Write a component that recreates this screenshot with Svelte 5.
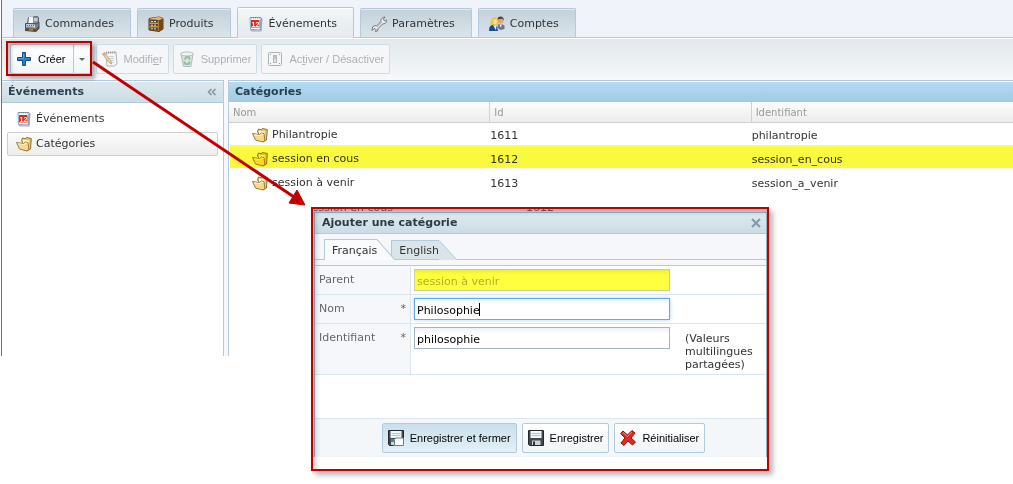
<script lang="ts">
	type Category = {
		name: string;
		id: number;
		slug: string;
	};

	const tabs = [
		{ label: 'Commandes', icon: 'register' },
		{ label: 'Produits', icon: 'cabinet' },
		{ label: 'Événements', icon: 'calendar' },
		{ label: 'Paramètres', icon: 'wrench' },
		{ label: 'Comptes', icon: 'users' }
	];

	const menu = [
		{ label: 'Événements', icon: 'calendar' },
		{ label: 'Catégories', icon: 'folder' }
	];

	const categories: Category[] = [
		{ name: 'Philantropie', id: 1611, slug: 'philantropie' },
		{ name: 'session en cous', id: 1612, slug: 'session_en_cous' },
		{ name: 'session à venir', id: 1613, slug: 'session_a_venir' }
	];

	let activeTab = $state('Événements');
	let activeMenu = $state('Catégories');
	let selected = $state(1612);
	let language = $state('Français');

	let parent = $state('session à venir');
	let name = $state('Philosophie');
	let identifier = $state('philosophie');

	function reset() {
		name = '';
		identifier = '';
	}
</script>

{#snippet icon(kind: string)}
	<svg class="icon" viewBox="0 0 16 16" width="16" height="16" aria-hidden="true">
		{#if kind === 'register'}
			<path d="M4.5 1.5l9-1 1 1v6h-11z" fill="#8b979f" stroke="#566069" />
			<path d="M5 1l4-.5V7H4.500z" fill="#f4f7f9" />
			<path d="M10 2h3.500v3H10z" fill="#c2ccd3" />
			<path d="M1 12.500l11 1 3.500-4v3l-3.500 3.500-11-1z" fill="#6b4524" />
			<path d="M1.500 7.500l10.500.5 3-2v4l-3 3.500-10.500-1z" fill="#77828a" stroke="#49525a" />
			<path d="M2.500 8l8.500.5v3l-9-.5z" fill="#d3dae0" />
			<path d="M3 9.500h7M3.500 10.800h6" stroke="#59646d" stroke-dasharray="1 1" />
			<path d="M5 13.800h4" stroke="#cfa055" />
		{:else if kind === 'cabinet'}
			<path d="M1 2.500L11 1l4 1.500V13l-4 2.500L1 14z" fill="#a9752f" stroke="#5b3c18" />
			<path d="M11 4l4-1.500V13l-4 2.500z" fill="#6f481e" />
			<path d="M2.200 4h7.600v2.800H2.200zM2.200 7.800h7.600v2.500H2.200zM2.200 11.200h7.600V14H2.200z" fill="#4a4238" />
			<path d="M3 5.500h6M3 9.200h6M3 12.800h6" stroke="#d9e2e8" stroke-dasharray="2 1" />
			<path d="M1 2.500L11 1l4 1.500L11 4z" fill="#e4b76c" />
			<path d="M1.500 7.300h9M1.500 10.800h9" stroke="#e0a850" />
		{:else if kind === 'calendar'}
			<path d="M12 1.500l2.500 1-1 13-2-1.500z" fill="#8fa4be" />
			<path d="M2 1.500h11l-1 12.500-9.500-.5z" fill="#fafbfd" stroke="#8ba0ba" />
			<path d="M2 14l9.500.5 2 1H4z" fill="#9bafc6" />
			<path d="M3 1.800h9.500" stroke="#64788f" stroke-dasharray="1 1" />
			<rect x="3" y="4" width="8.500" height="7.500" fill="#df2a16" />
			<text x="3.500" y="10.500" class="day">12</text>
		{:else if kind === 'wrench'}
			<path
				d="M1 14.500l.5-3.500L4 9.500l1.500.5L10 5.500V3.500L12.500 1H14l-1.500 2 .5 1.500 1.500.500L16 3.500V5l-2 2.500-2.500.500L7 12.500 6.500 15l-2 .5.5-2-1-1-1.500.5z"
				fill="#eceeef"
				stroke="#73787c"
				stroke-linejoin="round"
			/>
			<path d="M6 11l5-5" stroke="#b4b9bd" />
		{:else if kind === 'users'}
			<path d="M9 8.500q3.500-1.500 6.500 1v3.500l-4 1-3-2z" fill="#707782" />
			<path d="M10.500 8.500l1 3 1.500-3z" fill="#f5f7f8" />
			<circle cx="11.500" cy="4.800" r="3" fill="#dba979" />
			<path d="M8.300 4q0-3.500 3.200-3.500T15 4.500l-1.500-1.700-3 .2z" fill="#55402e" />
			<path d="M1.200 10L2 4.500Q3 .8 6 1q3 .3 3 4v5z" fill="#f0c544" />
			<path d="M4.500 4l3-1 .5 4-2 1.500-1.500-1z" fill="#f8dbad" />
			<path d="M0 15l.5-4q4-4 7.500-.5l1 4.500z" fill="#184b8b" />
			<path d="M4 9l3 5.500.5-5z" fill="#e2edf7" />
		{:else if kind === 'folder'}
			<path
				d="M5.500 4.500L6.500 2l3 .8.800-1.300 5 1-.8 10.500-3.500 2z"
				fill="#e5c47f"
				stroke="#94702f"
				stroke-linejoin="round"
			/>
			<path d="M7 3.500l6 1-1 8-5-3z" fill="#fff3c9" />
			<path
				d="M.5 6.500l7 1 2-1.500 2.500.6.800 6.400-1.800 2-7.500-2z"
				fill="#f6d891"
				stroke="#a37d3a"
				stroke-linejoin="round"
			/>
			<path d="M2 7.800l6 .8 1.800-1.600 1.500.4" stroke="#fff5d0" fill="none" />
		{:else if kind === 'plus'}
			<path
				d="M6.500 1.500h3v5h5v3h-5v5h-3v-5h-5v-3h5z"
				fill="#2f81b7"
				stroke="#164f79"
				stroke-linejoin="round"
			/>
			<path d="M7.500 2.500v5h-5" stroke="#5aa2cd" fill="none" />
		{:else if kind === 'edit'}
			<path d="M4 2l10-1 1 12-3 2H5z" fill="#f5f7f9" stroke="#65717b" />
			<path d="M7 5.500h5M7 7.500h5M8 9.500h4M9 11.500h3" stroke="#a5b0b9" />
			<path d="M4 1.500h10" stroke="#48525b" stroke-dasharray="1 1" stroke-width="2" />
			<path d="M.5 3l2-1.500 6.500 8.500.5 3-2.500-1.500z" fill="#f3b131" stroke="#8f5f20" />
			<path d="M.5 3l2-1.500L4 3.500 2 5z" fill="#dc4b41" />
		{:else if kind === 'bin'}
			<path d="M2 3h12l-2 12.500H4.500z" fill="#c5ced7" stroke="#76828d" />
			<ellipse cx="8" cy="3" rx="6.500" ry="2" fill="#eef2f5" stroke="#76828d" />
			<path
				d="M5.500 8.500L7.500 6h2L11 8.500M11 10.500L9.500 13h-3l-1.500-2.500"
				fill="none"
				stroke="#24963a"
				stroke-width="2"
			/>
		{:else if kind === 'switch'}
			<rect x="1.500" y="1.500" width="13" height="13" rx="1" fill="#f7f7f7" stroke="#6b7074" />
			<rect x="6.500" y="4.500" width="3" height="7" fill="#d7dadd" stroke="#777c80" />
			<path d="M8 5v3M3 3.500h1M12 3.500h1M3 12.500h1M12 12.500h1" stroke="#3c4043" />
		{:else if kind === 'save'}
			<path d="M.5.5h15v15h-14l-1-1z" fill="#44494e" stroke="#24292d" />
			<path d="M2.500 1h11v7h-11z" fill="#f0f8fd" />
			<path d="M3.500 3.500h9M3.500 5.500h9" stroke="#9bcae6" />
			<path d="M4 10.500h8.500V15H4z" fill="#cdd3d8" />
			<path d="M5 11.500h2V15H5z" fill="#2a3036" />
		{:else if kind === 'save-close'}
			<path d="M.5.5h15v8H5.500v7h-4l-1-1z" fill="#44494e" stroke="#24292d" />
			<path d="M2.500 1h11v7h-11z" fill="#f0f8fd" />
			<path d="M3.500 3.500h9M3.500 5.500h9" stroke="#9bcae6" />
			<path d="M3 9h3v3H3z" fill="#3d86be" />
			<path d="M3 12h3v3H3z" fill="#cdd3d8" />
			<path d="M6.500 9.500l1-1.500h8v7.500h-9z" fill="#fafcfd" stroke="#737d85" />
		{:else if kind === 'cross'}
			<path
				d="M.5 3.500L3 1l4.500 4L12 .500 15 3l-4 5 4.500 4-3 3-4.500-4L4 15.500 1 13l4-5z"
				fill="#dd2a20"
				stroke="#8b120e"
				stroke-linejoin="round"
			/>
			<path d="M2 3.500l1-1 4.500 4L12 2" stroke="#f58478" fill="none" />
		{/if}
	</svg>
{/snippet}

<div class="page">
	<div class="app">
		<nav class="tabs">
			{#each tabs as tab}
				<button
					class="tab"
					class:active={activeTab === tab.label}
					onclick={() => (activeTab = tab.label)}
				>
					{@render icon(tab.icon)}{tab.label}
				</button>
			{/each}
		</nav>

		<div class="toolbar">
			<div class="split">
				<button class="btn create">{@render icon('plus')}Créer</button>
				<button class="btn more" aria-label="Plus"><span class="caret-down"></span></button>
			</div>
			<button class="btn" disabled>{@render icon('edit')}<span>Modifi<u>e</u>r</span></button>
			<button class="btn" disabled>{@render icon('bin')}Supprimer</button>
			<button class="btn" disabled>
				{@render icon('switch')}<span>Ac<u>t</u>iver / Désactiver</span>
			</button>
		</div>

		<div class="panels">
			<aside class="panel side">
				<header class="panel-head">
					<h2>Événements</h2>
					<button class="collapse" aria-label="Réduire">
						<svg viewBox="0 0 10 8" width="10" height="8">
							<path d="M4.500 1l-3 3 3 3M8.500 1l-3 3 3 3" fill="none" stroke="#7d93a0" stroke-width="1.500" />
						</svg>
					</button>
				</header>
				<div class="menu">
					{#each menu as item}
						<button
							class="menu-item"
							class:active={activeMenu === item.label}
							onclick={() => (activeMenu = item.label)}
						>
							{@render icon(item.icon)}{item.label}
						</button>
					{/each}
				</div>
			</aside>

			<main class="panel content">
				<header class="panel-head strong"><h2>Catégories</h2></header>
				<table>
					<thead>
						<tr><th>Nom</th><th>Id</th><th>Identifiant</th></tr>
					</thead>
					<tbody>
						{#each categories as category}
							<tr
								class:selected={selected === category.id}
								onclick={() => (selected = category.id)}
							>
								<td><span class="node">{@render icon('folder')}{category.name}</span></td>
								<td>{category.id}</td>
								<td>{category.slug}</td>
							</tr>
						{/each}
					</tbody>
				</table>
			</main>
		</div>
	</div>

	<!-- callouts -->
	<div class="callout"></div>
	<svg class="arrow" viewBox="0 0 216 146" width="216" height="146" aria-hidden="true">
		<path d="M1 1L202 136" stroke="#c00000" stroke-width="3" />
		<path d="M213 144L197 142L205 129z" fill="#c00000" stroke="#c00000" />
	</svg>

	<div class="frame">
		<div class="behind">
			<div class="ghost" aria-hidden="true"><span>session en cous</span><span>1612</span></div>
			<form class="dialog" onsubmit={(e) => e.preventDefault()}>
				<header class="dialog-head">
					<h2>Ajouter une catégorie</h2>
					<button type="button" class="close" aria-label="Fermer">
						<svg viewBox="0 0 10 10" width="10" height="10">
							<path d="M1 1l8 8M9 1L1 9" stroke="#8599a6" stroke-width="2" />
						</svg>
					</button>
				</header>

				<div class="languages">
					{#each ['Français', 'English'] as lang}
						<button
							type="button"
							class="lang"
							class:active={language === lang}
							onclick={() => (language = lang)}
						>
							<span>{lang}</span>
							<svg viewBox="0 0 18 20" preserveAspectRatio="none" width="18">
								<path class="slope-fill" d="M0 0L18 20H0z" />
								<path class="slope-line" d="M0 .5L18 20" />
							</svg>
						</button>
					{/each}
				</div>

				<div class="fields">
					<div class="field">
						<label for="parent">Parent</label>
						<div class="control"><input id="parent" bind:value={parent} disabled /></div>
					</div>
					<div class="field">
						<label for="name">Nom<span>*</span></label>
						<div class="control">
							<input id="name" class="focused" bind:value={name} />
							<i class="cursor"></i>
						</div>
					</div>
					<div class="field">
						<label for="identifier">Identifiant<span>*</span></label>
						<div class="control"><input id="identifier" bind:value={identifier} /></div>
						<p>(Valeurs multilingues partagées)</p>
					</div>
				</div>

				<footer>
					<button class="btn primary">{@render icon('save-close')}Enregistrer et fermer</button>
					<button class="btn">{@render icon('save')}Enregistrer</button>
					<button type="button" class="btn" onclick={reset}>
						{@render icon('cross')}Réinitialiser
					</button>
				</footer>
			</form>
		</div>
	</div>
</div>

<style>
	:global(body) {
		background: #fff;
	}

	.page {
		position: relative;
		min-height: 100vh;
		font: 11px/14px 'DejaVu Sans', Verdana, sans-serif;
		color: #333;
	}

	.page *,
	.page *::before,
	.page *::after {
		box-sizing: border-box;
	}

	.app {
		min-height: 356px;
		display: flex;
		flex-direction: column;
		margin-left: 1px;
		border-left: 1px solid #c94b4b;
		background: #f5f7fa;
	}

	button,
	input {
		font: inherit;
		color: inherit;
		margin: 0;
	}

	h2,
	p {
		margin: 0;
		font-size: 11px;
		line-height: 14px;
	}

	.icon {
		flex: none;
	}

	.day {
		font: bold 7px 'Liberation Sans', sans-serif;
		fill: #fff;
	}

	/* tabs */

	.tabs {
		display: flex;
		gap: 6px;
		height: 38px;
		padding: 7px 11px 0;
		background: #f0f3f9;
		border-bottom: 1px solid #b4c9da;
	}

	.tab {
		display: flex;
		align-items: center;
		gap: 5px;
		margin-top: 1px;
		padding: 2px 16px 0 10px;
		border: 1px solid #b4c9da;
		border-bottom: 0;
		border-radius: 2px 2px 0 0;
		background: linear-gradient(#c3d1d9, #dae4ea);
		box-shadow: inset 0 1px #e0ebf2;
	}

	.tab.active {
		margin: 0 0 -1px;
		background: linear-gradient(#f2f6f8, #e3e9ed);
		box-shadow: inset 0 1px #fff;
	}

	/* toolbar */

	.toolbar {
		display: flex;
		gap: 4px;
		height: 42px;
		padding: 5px 8px;
		border-top: 1px solid #fff;
		background: linear-gradient(#e2e8ec, #f6f8fa);
	}

	.btn {
		display: flex;
		align-items: center;
		gap: 6px;
		height: 30px;
		padding: 0 5px;
		border: 1px solid #b3cada;
		border-radius: 2px;
		background: linear-gradient(#fff, #f1f5f7);
		font: 11px/14px 'Liberation Sans', Arial, sans-serif;
		color: #000;
		white-space: nowrap;
	}

	.btn:disabled {
		border-color: #cddde8;
		color: #aeb1b3;
		background: #f4f6f8;
	}

	.btn:disabled .icon {
		opacity: 0.5;
	}

	.split {
		display: flex;
		margin-right: 1px;
	}

	.create {
		padding-right: 7px;
		border-radius: 2px 0 0 2px;
	}

	.more {
		width: 17px;
		justify-content: center;
		border-left: 0;
	}

	.caret-down {
		border: 3px solid transparent;
		border-top-color: #666;
		border-bottom: 0;
	}

	/* panels */

	.panels {
		flex: 1;
		display: flex;
		gap: 4px;
	}

	.panel {
		border-top: 1px solid #b3cada;
		background: #fff;
	}

	.side {
		width: 222px;
		border-right: 1px solid #b3cada;
	}

	.content {
		flex: 1;
		border-left: 1px solid #b3cada;
	}

	.panel-head {
		display: flex;
		align-items: center;
		justify-content: space-between;
		height: 21px;
		padding: 0 6px;
		border-top: 1px solid #fff;
		background: linear-gradient(#dce8ee, #cddde5);
		color: #2b4452;
	}

	.side .panel-head {
		height: 22px;
		border-bottom: 1px solid #b3cada;
	}

	.panel-head.strong {
		background: linear-gradient(#b3dcf3, #a1cbe2);
		color: #263e4d;
	}

	.collapse,
	.close {
		display: flex;
		padding: 0;
		border: 0;
		background: none;
	}

	.menu {
		display: flex;
		flex-direction: column;
		gap: 1px;
		padding: 4px 5px;
	}

	.menu-item {
		display: flex;
		align-items: center;
		gap: 4px;
		height: 24px;
		padding: 0 8px;
		border: 1px solid transparent;
		border-radius: 2px;
		background: none;
	}

	.menu-item.active {
		border-color: #cfcfcf;
		background: linear-gradient(#fbfbfb, #ededed);
	}

	table {
		width: 100%;
		table-layout: fixed;
		border-collapse: separate;
		border-spacing: 0;
	}

	th {
		height: 21px;
		padding: 1px 4px 0;
		border-right: 1px solid #d0d0d0;
		border-bottom: 1px solid #d0d0d0;
		background: linear-gradient(#fdfdfd, #ececec);
		font-size: 10px;
		font-weight: normal;
		text-align: left;
		color: #999;
	}

	th:last-child {
		border-right: 0;
	}

	td {
		height: 24px;
		padding: 1px 0 0;
	}

	tbody tr {
		position: relative;
	}

	.node {
		display: flex;
		align-items: center;
		gap: 4px;
		padding: 0 0 1px 23px;
	}

	.selected {
		background: #f9f9f9;
	}

	/* marker stroke over the whole row, slightly higher than it */
	.selected td:first-child::after {
		content: '';
		position: absolute;
		inset: -2px 0 3px 1px;
		background: #ffff40;
		mix-blend-mode: multiply;
	}

	/* callouts */

	.callout {
		position: absolute;
		left: 6px;
		top: 41px;
		width: 86px;
		height: 35px;
		border: 2px solid #c00000;
		box-shadow:
			3px 3px 4px rgba(0, 0, 0, 0.3),
			inset 3px 3px 4px rgba(0, 0, 0, 0.2);
		pointer-events: none;
	}

	.arrow {
		position: absolute;
		left: 92px;
		top: 61px;
		pointer-events: none;
	}

	.frame {
		position: absolute;
		left: 311px;
		top: 207px;
		width: 458px;
		padding-bottom: 12px;
		border: 2px solid #c00000;
		background: #fff;
		box-shadow: 4px 4px 5px rgba(0, 0, 0, 0.28);
	}

	.frame::after {
		content: '';
		position: absolute;
		inset: 0;
		box-shadow: inset 3px 3px 5px rgba(0, 0, 0, 0.2);
		pointer-events: none;
	}

	.behind {
		padding-left: 1px;
		background: #d3d6d8;
	}

	/* bottom edge of the row that the dialog covers */
	.ghost {
		display: grid;
		grid-template-columns: 212px 1fr;
		align-content: end;
		height: 3px;
		overflow: hidden;
		color: #666;
	}

	.ghost span {
		margin: 0 0 -3px -8px;
	}

	.ghost span:last-child {
		margin-left: 0;
	}

	/* dialog */

	.dialog {
		border: 1px solid #9db4c2;
		border-bottom: 0;
		background: #fff;
	}

	.dialog-head {
		display: flex;
		align-items: center;
		justify-content: space-between;
		height: 21px;
		padding: 0 5px 0 7px;
		border-bottom: 1px solid #b3cada;
		background: linear-gradient(#dfeaf0, #ccdce4);
		color: #2c3c46;
	}

	.languages {
		display: flex;
		align-items: flex-end;
		height: 32px;
		padding: 0 9px 5px;
		background: #f5f7fa;
		border-bottom: 1px solid #b3cada;
		box-shadow:
			inset 0 -5px #f5f7fa,
			inset 0 -6px #b3cada;
	}

	.lang {
		display: flex;
		height: 20px;
		padding: 0;
		border: 0;
		background: none;
	}

	.lang + .lang {
		margin-left: -4px;
	}

	.lang span {
		height: 20px;
		padding: 3px 0 0 7px;
		border: 1px solid #b3cada;
		border-right: 0;
		background: #dae5ea;
	}

	.lang svg {
		height: 20px;
	}

	.lang.active {
		position: relative;
		height: 21px;
	}

	.lang.active span {
		height: 21px;
		padding-top: 4px;
		border-bottom: 0;
		background: #f9fbfc;
	}

	.lang.active svg {
		height: 21px;
	}

	.slope-fill {
		fill: #dae5ea;
	}

	.active .slope-fill {
		fill: #f9fbfc;
	}

	.slope-line {
		stroke: #b3cada;
	}

	.fields {
		padding-bottom: 43px;
	}

	.field {
		display: flex;
		border-bottom: 1px solid #d9e6ee;
	}

	.field label {
		display: flex;
		justify-content: space-between;
		width: 96px;
		padding: 7px 4px 0;
		border-right: 1px solid #d9e6ee;
		background: #f5f7fa;
		color: #666;
	}

	.control {
		position: relative;
		padding: 3px;
	}

	.field input {
		display: block;
		width: 256px;
		height: 22px;
		padding: 2px 2px 0;
		border: 1px solid #9fb6c9;
		border-radius: 0;
		outline: 0;
		background: linear-gradient(#f0f2f6, #fff 6px);
		color: #000;
	}

	.field input:disabled {
		border-color: #c9cf9a;
		background: linear-gradient(#ecec35, #ffff40 5px);
		color: #b0b02c;
	}

	.field input.focused {
		border-color: #62abe6;
		box-shadow: 0 0 4px #a9d3f5;
	}

	.cursor {
		position: absolute;
		left: 68px;
		top: 8px;
		width: 1px;
		height: 13px;
		background: #000;
	}

	.field p {
		width: 90px;
		padding: 8px 0 3px 12px;
		line-height: 13px;
	}

	footer {
		display: flex;
		justify-content: center;
		gap: 5px;
		padding: 4px 0 4px 6px;
		border-top: 1px solid #d9e6ee;
		background: #f3f7f9;
	}

	.primary {
		background: linear-gradient(#c9e0ec, #e3f0f7);
	}
</style>
